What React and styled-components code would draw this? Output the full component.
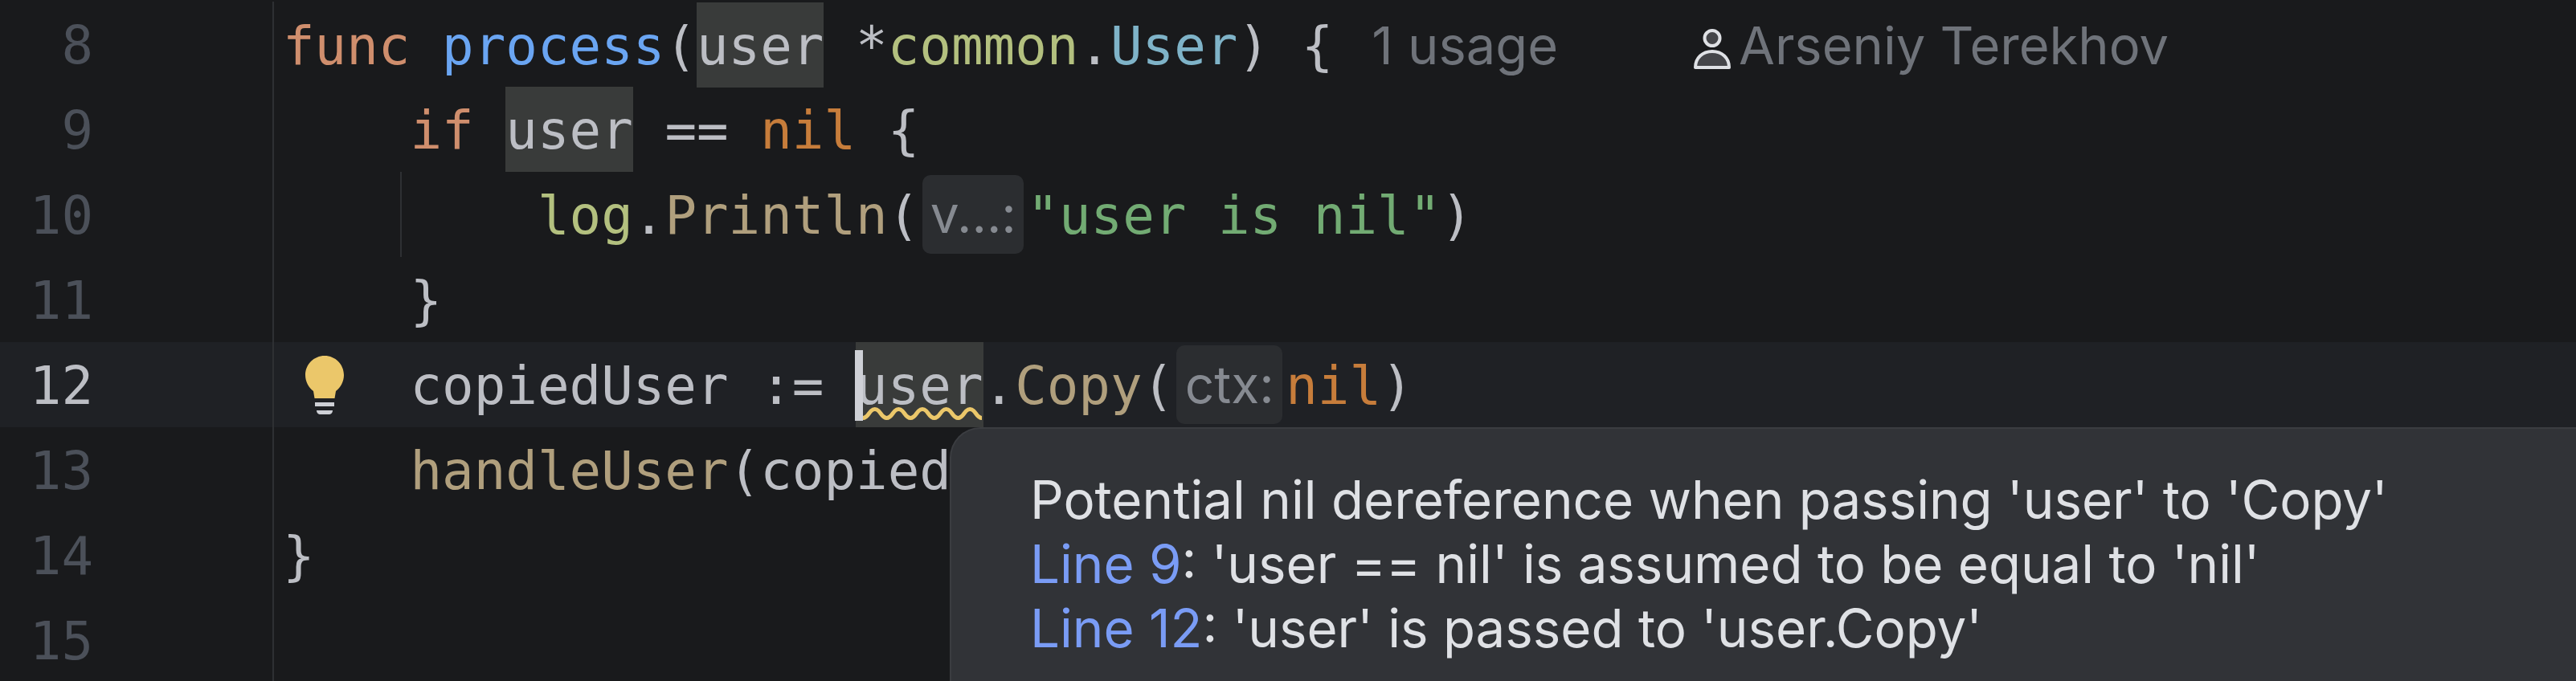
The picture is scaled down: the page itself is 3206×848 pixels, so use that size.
import React from "react";
import styled, { createGlobalStyle } from "styled-components";

const Global = createGlobalStyle`
  html, body { margin: 0; padding: 0; background: #191a1c; }
  #root { width: 3206px; height: 848px; overflow: hidden; }
`;

const Editor = styled.div`
  position: relative;
  width: 3206px;
  height: 848px;
  overflow: hidden;
  padding-top: 2px;
  box-sizing: border-box;
  background: #191a1c;
  font-family: "DejaVu Sans Mono", "Liberation Mono", monospace;
  font-size: 65.8px;
`;

const Row = styled.div`
  display: flex;
  height: 106px;
  line-height: 110px;
  white-space: pre;
  background: ${(p) => (p.$active ? "#1f2125" : "transparent")};
`;

const LineNumber = styled.div`
  flex: none;
  width: 116px;
  text-align: right;
  color: ${(p) => (p.$active ? "#bcbec4" : "#4b5059")};
`;

const GutterSpacer = styled.div`
  flex: none;
  width: 223px;
`;

const BulbWrap = styled.div`
  position: absolute;
  left: 39px;
  top: 14px;
  width: 48px;
  height: 74px;
`;

const Code = styled.div`
  flex: 1;
  height: 106px;
  border-left: 2px solid #2e3033;
  padding-left: 11px;
  min-width: 0;
  position: relative;
  color: #bcbec4;
`;

const Tok = styled.span`
  color: ${(p) => p.$c};
`;

const Guide = styled.span`
  position: absolute;
  left: 157px;
  top: 0;
  bottom: 0;
  width: 2px;
  background: #2e3033;
`;

const Occurrence = styled.span`
  position: relative;
  display: inline-block;
  height: 106px;
  background: #393b3a;
  color: #bcbec4;
`;

const Caret = styled.span`
  position: absolute;
  left: -1px;
  top: 10px;
  width: 10px;
  height: 88px;
  background: #ced0d6;
`;

const Wave = styled.svg`
  position: absolute;
  left: 9px;
  top: 80px;
  width: 148px;
  height: 18px;
`;

const Inlay = styled.span`
  display: inline-block;
  vertical-align: top;
  box-sizing: border-box;
  text-align: center;
  width: ${(p) => p.$w}px;
  height: 98px;
  margin: 4px 4px 0 ${(p) => p.$ml}px;
  border-radius: 10px;
  background: #2b2d30;
  color: #868a91;
  font-family: Inter, "Liberation Sans", sans-serif;
  font-size: 64px;
  line-height: 98px;
`;

const Hint = styled.span`
  font-family: Inter, "Liberation Sans", sans-serif;
  font-size: 65px;
  color: #6f737a;
`;

const Usage = styled(Hint)`
  margin-left: 48px;
`;

const Author = styled(Hint)`
  margin-left: 169px;
`;

const Person = styled.svg`
  display: inline-block;
  vertical-align: -6px;
  width: 46px;
  height: 50px;
  margin-right: 10px;
`;

const Popup = styled.div`
  position: absolute;
  left: 1182px;
  top: 532px;
  right: -40px;
  height: 360px;
  box-sizing: border-box;
  padding: 49px 0 0 98px;
  background: #313337;
  border: 2px solid #3b3d41;
  border-bottom: 0;
  border-radius: 38px;
  font-family: Inter, "Liberation Sans", sans-serif;
  font-size: 65.4px;
  line-height: 80px;
  color: #dfe1e5;
  white-space: pre;
`;

const Link = styled.span`
  color: #7a9cf5;
`;

const KW = "#cf8e6d";
const FN = "#6aa5f2";
const PKG = "#b3c07f";
const TYPE = "#7fb3c8";
const NIL = "#c77d3b";
const CALL = "#b09f7d";
const STR = "#72ab73";

function Bulb() {
  return (
    <BulbWrap>
      <svg width="48" height="74" viewBox="0 0 48 74">
        <path d="M24 0C10.7 0 0 10.7 0 24c0 8.300 4.200 15.600 10 20L11.500 53h25l1.500-9C43.800 39.600 48 32.300 48 24 48 10.700 37.300 0 24 0Z" fill="#ebc76a" />
        <rect x="12" y="58" width="24" height="5" fill="#ced0d6" />
        <path d="M14 68h20c0 3-2 5-5 5h-10c-3 0-5-2-5-5Z" fill="#ced0d6" />
      </svg>
    </BulbWrap>
  );
}

function PersonIcon() {
  return (
    <Person viewBox="0 0 46 50">
      <circle cx="23" cy="11.500" r="9.500" fill="#45464a" stroke="#dfe1e5" strokeWidth="4" />
      <path d="M2 48c0-12 9-20 21-20s21 8 21 20Z" fill="#45464a" stroke="#dfe1e5" strokeWidth="4" strokeLinejoin="round" />
    </Person>
  );
}

function WaveLine() {
  let d = "M0 14.500";
  for (let i = 0; i < 5; i++) {
    d += " c7.400 0 7.400 -11 14.800 -11 s7.400 11 14.800 11";
  }
  return (
    <Wave viewBox="0 0 148 18">
      <path d={d} fill="none" stroke="#ebc76a" strokeWidth="5" />
    </Wave>
  );
}

const LINES = [
  {
    n: 8,
    code: (
      <>
        <Tok $c={KW}>func</Tok> <Tok $c={FN}>process</Tok>(<Occurrence>user</Occurrence> *<Tok $c={PKG}>common</Tok>.<Tok $c={TYPE}>User</Tok>) {"{"}
        <Usage>1 usage</Usage>
        <Author>
          <PersonIcon />
          Arseniy Terekhov
        </Author>
      </>
    ),
  },
  {
    n: 9,
    code: (
      <>
        {"    "}<Tok $c={KW}>if</Tok> <Occurrence>user</Occurrence> == <Tok $c={NIL}>nil</Tok> {"{"}
      </>
    ),
  },
  {
    n: 10,
    code: (
      <>
        <Guide />
        {"        "}<Tok $c={PKG}>log</Tok>.<Tok $c={CALL}>Println</Tok>(
        <Inlay $w={126} $ml={4}>v...:</Inlay>
        <Tok $c={STR}>"user is nil"</Tok>)
      </>
    ),
  },
  { n: 11, code: <>{"    }"}</> },
  {
    n: 12,
    active: true,
    code: (
      <>
        <Bulb />
        {"    copiedUser := "}
        <Occurrence>
          <Caret />
          user
          <WaveLine />
        </Occurrence>
        .<Tok $c={CALL}>Copy</Tok>(
        <Inlay $w={132} $ml={3}>ctx:</Inlay>
        <Tok $c={NIL}>nil</Tok>)
      </>
    ),
  },
  {
    n: 13,
    code: (
      <>
        {"    "}<Tok $c={CALL}>handleUser</Tok>(copied
      </>
    ),
  },
  { n: 14, code: <>{"}"}</> },
  { n: 15, code: null },
];

export default function App() {
  return (
    <Editor>
      <Global />
      {LINES.map((l) => (
        <Row key={l.n} $active={l.active}>
          <LineNumber $active={l.active}>{l.n}</LineNumber>
          <GutterSpacer />
          <Code>{l.code}</Code>
        </Row>
      ))}
      <Popup>
        {"Potential nil dereference when passing 'user' to 'Copy'\n"}
        <Link>Line 9</Link>
        {": 'user == nil' is assumed to be equal to 'nil'\n"}
        <Link>Line 12</Link>
        {": 'user' is passed to 'user.Copy'"}
      </Popup>
    </Editor>
  );
}
